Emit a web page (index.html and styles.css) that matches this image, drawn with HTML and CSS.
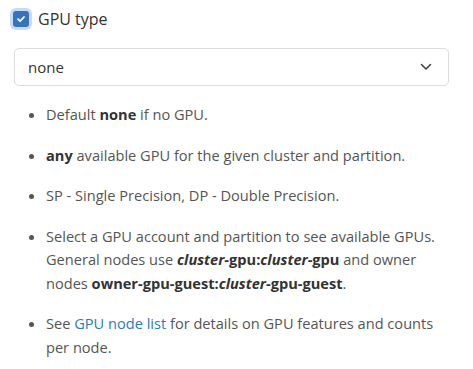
FILE: index.html
```html
<!DOCTYPE html>
<html lang="en">
<head>
    <meta charset="UTF-8">
    <title>GPU type</title>
    <link rel="stylesheet" href="styles.css">
</head>
<body>
    <div class="container">
        <label class="check">
            <span class="check-box">
                <svg width="10" height="10" viewBox="0 0 10 10"><path d="M2 5.2 L4.1 7.2 L8 3" fill="none" stroke="#fff" stroke-width="1.8" stroke-linecap="round" stroke-linejoin="round"/></svg>
            </span>
            <span>GPU type</span>
        </label>

        <div class="select">
            <span>none</span>
            <svg width="12" height="8" viewBox="0 0 12 8"><path d="M1.5 1.5 L6 6 L10.5 1.5" fill="none" stroke="#444" stroke-width="1.6" stroke-linecap="round" stroke-linejoin="round"/></svg>
        </div>

        <ul class="notes">
            <li>Default <b>none</b> if no GPU.</li>
            <li><b>any</b> available GPU for the given cluster and partition.</li>
            <li>SP - Single Precision, DP - Double Precision.</li>
            <li>Select a GPU account and partition to see available GPUs. General nodes use <b><i>cluster</i>-gpu:<i>cluster</i>-gpu</b> and owner nodes <b>owner-gpu-guest:<i>cluster</i>-gpu-guest</b>.</li>
            <li>See <a href="#">GPU node list</a> for details on GPU features and counts per node.</li>
        </ul>
    </div>
</body>
</html>
```

FILE: styles.css
```css
body {
    margin: 0;
    padding: 0;
    background-color: #fff;
    font-family: "Open Sans", "Noto Sans", sans-serif;
    color: #555;
}

.container {
    padding: 8px 24px 0 14px;
}

.check {
    display: flex;
    align-items: center;
    gap: 9px;
    font-size: 16px;
    color: #333;
    height: 22px;
}

.check-box {
    width: 16px;
    height: 16px;
    margin-left: -1px;
    border-radius: 3px;
    background-color: #3573bd;
    box-shadow: 0 0 0 3px #c9dbf0;
    display: flex;
    align-items: center;
    justify-content: center;
}

.select {
    margin-top: 18px;
    height: 36px;
    border: 1px solid #dcdcdf;
    border-radius: 5px;
    display: flex;
    align-items: center;
    justify-content: space-between;
    padding: 0 16px 0 13px;
    font-size: 15px;
    color: #333;
}

.notes {
    margin: 17px 0 0 0;
    padding-left: 32px;
    font-size: 14.6px;
    line-height: 23.5px;
}

.notes li {
    margin-bottom: 17px;
}

.notes b {
    color: #333;
}

.notes a {
    color: #2a7bbf;
    text-decoration: none;
}
```
